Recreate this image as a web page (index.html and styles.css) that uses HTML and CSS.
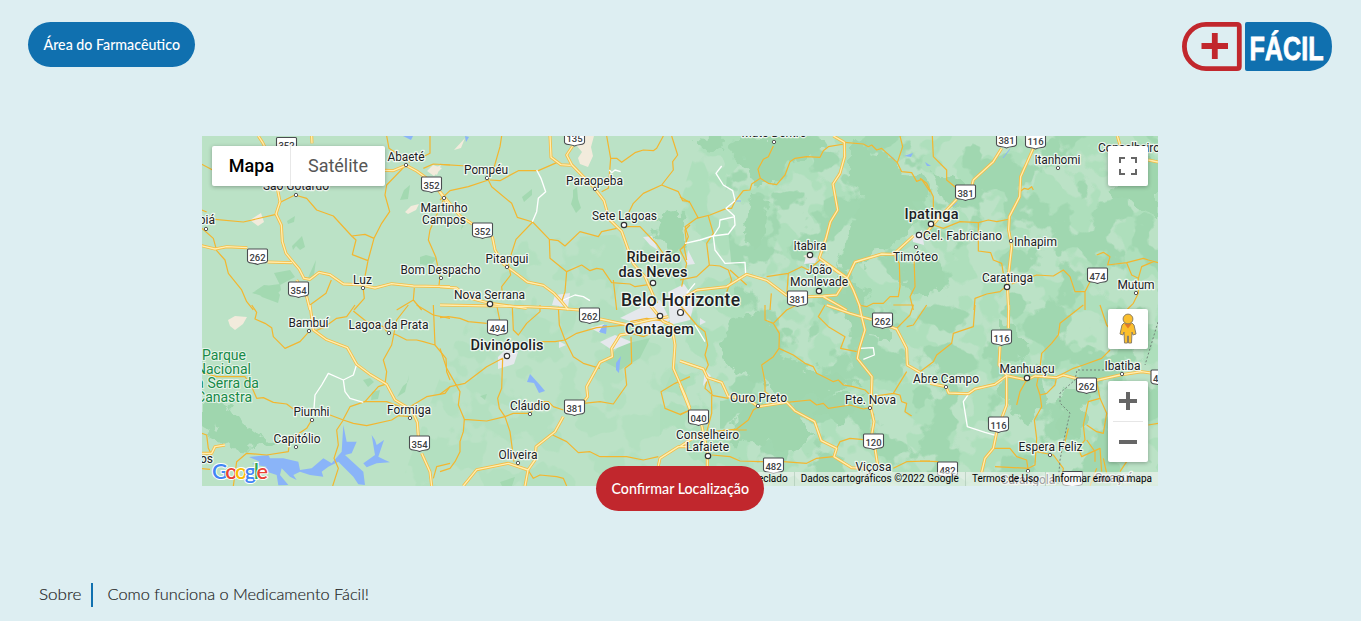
FILE: index.html
```html
<!DOCTYPE html>
<html lang="pt-BR">
<head>
<meta charset="utf-8">
<title>Medicamento Fácil</title>
<link rel="stylesheet" href="styles.css">
</head>
<body>
<header class="header">
  <a class="btn btn-blue"><svg class="label" width="137" height="20"><text x="0.500" y="14.500" textLength="136.500" lengthAdjust="spacingAndGlyphs">Área do Farmacêutico</text></svg></a>
  <svg class="logo" viewBox="0 0 150 49" width="150" height="49">
    <path d="M24 2.4H55Q57.3 2.4 57.3 4.5V44.5Q57.3 46.6 55 46.6H24A21.5 22 0 0 1 24 2.4Z" fill="none" stroke="#c1272d" stroke-width="4.800"/>
    <path d="M32.800 11V37M19.500 24H46" stroke="#c1272d" stroke-width="5.800"/>
    <path d="M65 0H128Q150 3 150 24.500Q150 46 128 49H65Q63 49 63 47V2Q63 0 65 0Z" fill="#1070af"/>
    <text class="logo-text" x="67.500" y="37.500" textLength="74" lengthAdjust="spacingAndGlyphs">FÁCIL</text>
  </svg>
</header>
<main class="main">
  <section class="map">
    <svg class="canvas" viewBox="202 136 956 350" width="956" height="350">
      <defs>
        <filter id="rough" x="-5%" y="-5%" width="110%" height="110%" color-interpolation-filters="sRGB"><feTurbulence type="fractalNoise" baseFrequency=".06" numOctaves="3" seed="4"/><feDisplacementMap in="SourceGraphic" scale="26" xChannelSelector="R" yChannelSelector="G"/></filter>
        <filter id="patch" x="0" y="0" width="100%" height="100%" color-interpolation-filters="sRGB"><feTurbulence type="fractalNoise" baseFrequency=".026" numOctaves="4" seed="11"/><feColorMatrix values="0 0 0 0 .627  0 0 0 0 .843  0 0 0 0 .69  22 0 0 0 -11.800"/><feComposite in2="SourceGraphic" operator="in"/></filter>
        <filter id="patch2" x="0" y="0" width="100%" height="100%" color-interpolation-filters="sRGB"><feTurbulence type="fractalNoise" baseFrequency=".032" numOctaves="3" seed="27"/><feColorMatrix values="0 0 0 0 .682  0 0 0 0 .875  0 0 0 0 .737  0 22 0 0 -10.800"/><feComposite in2="SourceGraphic" operator="in"/></filter>
        <g id="shield"><path d="M-9-7.500H9Q10-7.500 10-6.500V4Q10 6 6 6.500Q2 7 0 8Q-2 7-6 6.500Q-10 6-10 4V-6.500Q-10-7.500-9-7.500Z" fill="#fff" stroke="#4a4d50" stroke-width="1.100"/></g>
        <g id="hw">
          <g transform="translate(200 130) scale(.33333)">
            <path d="M175 18L188 38 198 58 230 165 240 215 228 252 244 285 247 335 258 370 276 392 298 418 312 445 330 448 357 427 390 434 430 462 480 464 525 474 575 461 640 468 750 470M0 346L45 357 80 350 142 353M203 396L276 398M290 450L320 500 330 540M555 121L580 122 618 106 650 123 680 145M715 180L750 232M335 18L336 40"/>
          </g>
          <g transform="translate(440 130) scale(.33333)">
            <path d="M0 185L60 258 97 282M157 320L165 360 190 402 232 433 262 456 310 466 342 490 365 515M0 470L50 474 80 502 150 520 260 535M330 18L333 82 363 104 392 106M398 48L380 75 395 104 464 175 492 212 508 268 545 304 580 402 615 440 650 520M365 515L385 540"/>
          </g>
          <g transform="translate(680 130) scale(.33333)">
            <path d="M460 18L493 37 494 80 480 130 459 162 473 240 451 276 438 325 418 384 470 424 502 444 520 480 540 530M418 384L502 444 525 396 565 384 605 372 640 373 700 318M50 480L140 470 200 433 260 451 322 498M384 500L430 498 470 495 502 444M0 510L50 480M430 500L500 540"/>
          </g>
          <g transform="translate(920 130) scale(.33333)">
            <path d="M245 55L220 95 160 150 155 170M110 208L60 260 10 318M340 55L302 140 299 200 268 260 266 300 275 350 262 465 266 540M592 18L600 45M685 90L714 96"/>
          </g>
          <g transform="translate(200 305) scale(.33333)">
            <path d="M330 0L340 75 380 104 442 128 470 178 510 208 560 238 585 285 635 315 652 352 655 395M665 445L690 500 695 543M0 445L35 445 45 425 75 420"/>
          </g>
          <g transform="translate(440 305) scale(.33333)">
            <path d="M260 5L330 8 420 15M480 42L565 60 630 45 685 35M570 85L540 90 515 130 517 155 480 172 440 245 443 275 430 292M370 335L345 380 288 425 285 465 264 495 255 543M264 495L205 475 110 494 70 543M630 0L670 50 695 60 705 120 700 190 735 270 750 310M0 0L260 5M750 425L715 425 660 460 655 483"/>
          </g>
          <g transform="translate(680 305) scale(.33333)">
            <path d="M0 168L70 192 82 218 125 232 145 275 200 280 235 305 320 292 345 318 404 350 424 407 470 430 462 455 515 488 560 490M538 0L545 35 555 75 538 130 532 160 576 215 573 310 582 350 575 390M585 430L593 480M440 0L510 25 575 44M630 65L650 72 680 130 682 180 720 202M0 240L30 315M65 360L82 440 82 490M0 425L60 385 70 410"/>
          </g>
          <g transform="translate(920 305) scale(.33333)">
            <path d="M266 0L265 70M240 125L237 180 260 212 320 225 345 213 410 218 430 210 475 222M30 235L78 245 86 264 145 266 165 252 225 238 260 212 260 300 245 340M230 382L220 430 195 460 185 502M530 226L600 210 665 200 700 205 714 210"/>
          </g>
        </g>
      </defs>
      <rect class="ground" x="202" y="136" width="956" height="350"/>
      <path d="M700 136H1158V486H660V400L690 330 665 250Z" filter="url(#patch2)"/>
      <path d="M730 136H1158V486H720V370L735 300 725 200Z" filter="url(#patch)"/>
      <path d="M450 350L520 240 700 230V486H400Z" filter="url(#patch2)" opacity=".55"/>
      <g class="forest" filter="url(#rough)">
        <path d="M740 136L830 136 825 150 790 160 774 184 755 180 730 150ZM752 187L768 205 765 240 758 252 742 230ZM690 136L730 138 720 150 698 145ZM850 145L880 150 895 170 925 175 930 190 915 205 918 220 900 245 880 250 870 265 835 270 850 225 865 205 850 185ZM835 263L860 285 870 315 895 325 885 340 850 335 840 305ZM660 213L685 214 682 250 650 238ZM650 218L682 210 680 235 690 245 670 250ZM730 320L765 310 780 350 765 385 735 375 720 340ZM765 355L810 365 850 380 860 385 800 400 770 395ZM745 402L790 402 815 435 790 455 750 440 735 450 730 420ZM900 260L935 255 945 285 925 300 900 290ZM1110 190L1145 210 1158 215V160L1148 155 1145 180 1120 182ZM1062 390L1085 385 1088 420 1072 440 1058 425ZM1000 385L1040 365 1045 400 1030 425 1010 410ZM202 401L230 405 240 420 268 440 255 450 232 448 202 425ZM935 170L970 190 945 205ZM1000 320L1030 340 1020 360 1000 350ZM820 395L860 395 840 425 815 415Z"/>
      </g>
      <path class="soft" d="M265 286L280 284 281 290 272 299 252 293ZM255 291L264 285 274 286 280 295 278 303 262 297ZM274 273L290 270 295 277 280 285ZM287 221L295 216 294 222 288 224ZM292 246L302 236 305 247 300 250 296 246 293 250ZM307 280L316 260 314 275 308 281ZM420 257L426 255 437 258 430 266 420 264ZM410 185L408 199 400 200 404 190ZM522 197L532 189 532 195 524 202ZM573 190L577 187 578 199 581 208 576 213 571 204 573 197ZM363 380L370 378 374 382 368 387ZM372 392L380 390 378 399 371 400ZM408 382L409 375 405 392 397 397 403 386ZM480 396L487 394 485 400ZM620 345L650 338 640 358 620 370 605 362ZM500 482L515 477 512 486H502ZM462 215L466 222 461 230 464 216Z"/>
      <g class="urban"><path d="M688 250L695 264 686 265ZM668 292L684 284 695 300 690 320 670 325ZM600 342L615 335 632 342 612 350ZM498 357L505 350 518 352 514 364 498 369ZM555 295L570 293 568 307 552 305ZM806 256L817 258 815 263 804 264ZM640 304L660 300 670 320 650 334 640 325ZM912 236L922 230 924 245 913 242ZM643 237L652 236 658 250 650 245ZM700 318L706 322 700 325ZM559 341L566 345 559 348ZM590 328L604 324 600 333ZM620 318L640 308 650 312 636 323ZM705 370L711 376 703 386Z"/>
      <path class="sand" d="M228 320L235 316 247 317 243 324 235 330 230 326ZM430 170L441 165 437 175ZM250 220L261 213 264 222 258 226ZM405 212L411 206 419 204 416 210 408 214ZM579 136L594 136 591 147 593 156 588 167 580 164 578 158 582 152 577 146ZM454 150L465 138 461 148ZM803 256L811 253 810 260ZM427 171L433 165 442 168 434 176Z"/></g>
      <g class="water">
        <path d="M403 136L413 136 411 140ZM465 136L469 137 466 142ZM527 382L530 374 540 385 545 391 539 393 534 383ZM599 332L603 325 607 325 606 334ZM616 363L621 356 620 362 619 373 616 370ZM904 156L913 153 911 157ZM925 162L931 166 927 166Z"/>
        <g transform="translate(200 305) scale(.33333)"><path d="M147 456L205 450 210 460 250 460 295 470 300 495 335 490 370 460 395 475 425 440 430 360 440 410 470 410 455 445 435 450 490 500 495 540 475 538 460 515 415 470 385 485 365 500 370 515 330 510 300 500 280 510 290 525 270 515 245 490 240 510 265 540 235 541 230 510 185 495 200 485 155 477 180 470ZM490 475L525 450 515 390 525 405 530 420 552 405 535 455 555 465 570 472 530 475 500 487Z"/></g>
        <path class="stream" d="M735 201H741M887 153L895 160M1003 158L1010 149M953 206L957 203"/>
      </g>
      <g class="minor">
        <g transform="translate(200 130) scale(.33333)"><path d="M0 100L38 120M235 220L285 195 320 205 350 240 400 258 455 318 495 313 522 325 545 280 569 245 555 195 560 165 617 106M455 318L468 330 457 374 504 392 522 325M504 392L489 470 493 505 462 540M0 238L20 246M45 268L130 276 228 253M0 290L40 325 50 362 75 390 85 430 125 480 140 515 160 540M330 525L378 490 394 450M560 18L567 55 630 97M650 90L690 70 690 18M670 115L700 102 750 105M732 205L690 300 685 330 707 380 720 440 717 466M643 474L640 510 590 540M665 540L640 510"/></g>
        <g transform="translate(440 130) scale(.33333)"><path d="M185 18L180 50 160 120 145 150M0 103L80 108M150 150L180 152 235 122 295 122 350 98M0 210L30 182 85 170 145 150 155 170 215 220 232 262 278 276 228 328 205 400 212 435 185 470 188 502M278 276L328 328 355 332 375 348 420 305 475 320 485 305 530 295M545 290L600 290 650 342 690 400M328 328L330 385 380 425 375 485 365 515M380 425L425 405 450 422 470 415 488 418 515 458 570 462 585 470 630 463M485 185L505 175 512 85 500 18M512 85L530 85 545 97 585 68 610 60 640 62 650 55 670 18M560 260L580 220 610 190 665 165 700 120 698 95 713 75 695 18M665 165L715 185 728 212 750 215M520 450L530 540M750 285L735 300 740 340 720 360 740 400 725 470"/></g>
        <g transform="translate(680 130) scale(.33333)"><path d="M280 48L265 80 250 88 234 118 241 145 215 162 210 180 190 182 165 214 155 235 140 235 90 255 50 265 15 290 25 320 12 350 20 390M241 145L265 160 290 164 315 135 330 95 345 85 380 80 420 82 430 62 445 50 493 42M493 37L550 42 565 50 575 45 590 60 605 55 652 98 668 50 660 18M652 98L665 125 695 128 710 154 725 148 750 185M0 200L30 218 55 265M85 258L100 310 80 340 88 405 120 408 145 420 155 450 140 485M320 500L325 430 365 410 385 420 420 390M325 430L260 440M150 420L200 465M274 490L270 540M640 373L658 400 660 470 655 500 630 500 610 520 580 520 560 530 535 525M702 380L705 470 690 500 700 540M88 405L50 440 0 450"/></g>
        <g transform="translate(920 130) scale(.33333)"><path d="M37 18L40 80 80 120 80 150 110 175M0 145L20 160 40 200V240M40 285L70 295 120 275 175 278 205 270 230 275 270 267M175 278L175 363 212 368 220 390 245 400 250 430M300 185L313 175 325 178 335 170 340 180M266 462L240 485 200 492 165 505 162 540M275 462L350 435 400 438 430 420 450 440 465 485 495 485 495 540M510 455L495 485M530 375L550 367 570 380 563 405 620 398 635 435 655 445 655 490 640 520 620 540M620 398L670 385 685 390 714 398M655 445L665 410 700 395"/></g>
        <g transform="translate(200 305) scale(.33333)"><path d="M155 0L170 22 165 42 195 55 215 68 220 95 255 130 300 110 325 82M345 78L370 68 410 40 440 35 465 0M460 18L500 50 550 65 560 80M580 85L620 105 650 105 670 110 705 120 700 0M705 120L738 160 740 200 750 225M625 0L590 45 575 120 550 165 560 200 555 238 535 245 495 290 450 305 430 343M650 0L700 30 750 40M0 200L50 215 135 215 155 245 170 280 190 278 220 292 260 297 280 312M335 345L320 370 290 390 270 400 265 440 200 450 140 445 110 470 100 543M390 330L430 345 410 375 415 420 402 460 415 490 398 543M430 345L460 355 500 362 575 345 595 332 630 335M490 290L560 290 600 305M630 305L680 275 735 265 750 245M0 383L20 390 25 430 35 450M0 490L30 493M750 475L710 485 700 520"/></g>
        <g transform="translate(440 305) scale(.33333)"><path d="M0 38L25 35 60 40 85 50 140 55M170 0L180 50M217 5L220 75 235 90 260 55 300 20 300 0M300 110L345 110 375 105 410 85 470 68 560 60M355 5L358 60 375 105 400 155 430 175 480 190M0 130L20 190 60 260 55 300 73 343 70 380 60 410 60 440 45 470 30 490 0 500M0 268L30 245 75 235 140 185 188 160 185 250 173 280 178 310 195 335 210 380 222 470M73 343L140 348 195 335 220 325 270 325 300 290 325 290 340 305 370 315M338 390L380 410 415 443 450 440 480 455 560 455 610 465 655 455M430 295L480 290 520 297 560 240 555 190 575 175 573 95M750 215L705 235 663 260 675 310 720 328 750 315M264 495L280 520 300 510 350 515 370 520 380 543M570 50L620 40 680 50M575 85L610 95 665 70"/></g>
        <g transform="translate(680 305) scale(.33333)"><path d="M255 0L255 45 280 55 320 15 350 0M280 55L298 85 297 130 280 155 245 180 255 230 255 260 290 285M297 130L340 150 375 175 400 185 410 205 440 220 460 230 475 225 490 240 520 245 555 255 575 275 640 265 680 200M435 0L415 35 445 65 495 95 482 130 530 140M0 0L50 60 75 80 83 120 75 150 85 180 75 200 95 260 95 325 75 400M80 230L75 250 100 272 145 280M0 330L30 315M200 375L130 375M235 305L220 315 205 345 170 372 100 380M320 292L390 285 410 300 430 295 445 310 510 300 550 312 570 308M95 450L150 455 180 468 240 470 310 470 380 475 410 460 460 455M470 430L480 410 510 400 550 404M640 265L660 270 665 290 680 295 675 320 695 333M640 0L700 0 690 30 650 70M740 0L700 60 680 65M640 490L680 470 750 468"/></g>
        <g transform="translate(920 305) scale(.33333)"><path d="M165 0L160 65 100 85 95 115 50 150 40 170 0 200M490 0L420 55 415 90 395 115 365 145 358 205M540 0L560 60 620 130M410 215L440 200 460 190 490 180 545 160 570 135M355 215L350 240 360 270 380 265 405 240 410 215M360 270L365 305 343 345 350 400 345 480 325 490 225 485M320 225L300 260 290 300M220 430L270 430 290 455 320 465 325 500M0 468L55 470M350 440L400 450 430 490 425 525M530 230L540 280 505 290 490 360 495 405 475 430 485 455 540 430 545 500M500 360L530 380 550 385 560 325 540 280M500 405L525 440 525 470M445 370L430 430M714 355L685 360M600 500L620 470M560 505L550 460M530 490L510 543"/></g>
      </g>
      <g class="white-road" transform="translate(440 130) scale(.33333)"><path d="M290 120L303 145 317 185 295 205 290 245 277 275M508 120L515 128 525 120 542 125M370 510L405 495 430 500 450 512"/></g>
      <g class="white-road" transform="translate(680 130) scale(.33333)"><path d="M125 108L108 130 130 165 158 182 165 212M165 212L138 235 163 258 165 285 145 312 98 318 60 330 15 340M165 260L120 270 118 290 100 318 105 360 135 400 195 397 197 432M45 460L20 490"/></g>
      <g class="white-road" transform="translate(200 305) scale(.33333)"><path d="M470 178L460 210 430 225 385 205 365 240 345 270 342 310M430 225L435 260 450 280 490 292"/></g>
      <g class="white-road" transform="translate(680 305) scale(.33333)"><path d="M538 130L580 128 583 150 550 163M45 60L75 110"/></g>
      <g class="white-road" transform="translate(920 305) scale(.33333)"><path d="M145 268L130 290 142 365 195 382 230 392"/></g>
      <use href="#hw" class="hw-edge"/><use href="#hw" class="hw-core"/>
      <path class="border-line" d="M1158 322L1145 365M1120 370H1077L1075 380 1060 393 1060 403 1070 413 1066 430 1060 460 1058 484"/>
      <g class="shields">
        <use href="#shield" x="286.500" y="145"/><text x="286.500" y="149">352</text>
        <use href="#shield" x="431.500" y="184.500"/><text x="431.500" y="188.500">352</text>
        <use href="#shield" x="482.500" y="230.500"/><text x="482.500" y="234.500">352</text>
        <use href="#shield" x="574.500" y="138"/><text x="574.500" y="142">135</text>
        <use href="#shield" x="257.500" y="256.500"/><text x="257.500" y="260.500">262</text>
        <use href="#shield" x="298.500" y="289.500"/><text x="298.500" y="293.500">354</text>
        <use href="#shield" x="589.500" y="315.500"/><text x="589.500" y="319.500">262</text>
        <use href="#shield" x="497.500" y="327.500"/><text x="497.500" y="331.500">494</text>
        <use href="#shield" x="574.500" y="407.500"/><text x="574.500" y="411.500">381</text>
        <use href="#shield" x="419.500" y="443.500"/><text x="419.500" y="447.500">354</text>
        <use href="#shield" x="698.500" y="417.500"/><text x="698.500" y="421.500">040</text>
        <use href="#shield" x="773.500" y="465.500"/><text x="773.500" y="469.500">482</text>
        <use href="#shield" x="797.500" y="298.500"/><text x="797.500" y="302.500">381</text>
        <use href="#shield" x="882.500" y="320.500"/><text x="882.500" y="324.500">262</text>
        <use href="#shield" x="873.500" y="441.500"/><text x="873.500" y="445.500">120</text>
        <use href="#shield" x="965.500" y="192.500"/><text x="965.500" y="196.500">381</text>
        <use href="#shield" x="1006.500" y="140"/><text x="1006.500" y="144">381</text>
        <use href="#shield" x="1035.500" y="141"/><text x="1035.500" y="145">116</text>
        <use href="#shield" x="1097.500" y="275.500"/><text x="1097.500" y="279.500">474</text>
        <use href="#shield" x="1001.500" y="337.500"/><text x="1001.500" y="341.500">116</text>
        <use href="#shield" x="998.500" y="424.500"/><text x="998.500" y="428.500">116</text>
        <use href="#shield" x="1086.500" y="385.500"/><text x="1086.500" y="389.500">262</text>
        <use href="#shield" x="947.500" y="469.500"/><text x="947.500" y="473.500">482</text>
        <use href="#shield" x="1161" y="377.500"/><text x="1161" y="381.500">482</text>
        <use href="#shield" x="1072.500" y="479"/>
      </g>
      <g class="dots">
        <circle cx="296" cy="195" r="1.700"/><circle cx="206" cy="229" r="1.700"/><circle cx="406" cy="165" r="1.700"/><circle cx="444" cy="198" r="1.700"/><circle cx="487" cy="178" r="1.700"/><circle cx="595" cy="189" r="1.700"/><circle cx="363" cy="288" r="1.700"/><circle cx="441" cy="278" r="1.700"/><circle cx="507" cy="267" r="1.700"/><circle cx="309" cy="331" r="1.700"/><circle cx="389" cy="333" r="1.700"/><circle cx="312" cy="420" r="1.700"/><circle cx="296" cy="447" r="1.700"/><circle cx="410" cy="418" r="1.700"/><circle cx="530" cy="414" r="1.700"/><circle cx="518" cy="463" r="1.700"/><circle cx="774" cy="142" r="1.700"/><circle cx="916" cy="247" r="1.700"/><circle cx="1011" cy="241" r="1.700"/><circle cx="1058" cy="168" r="1.700"/><circle cx="1136" cy="293" r="1.700"/><circle cx="758" cy="406" r="1.700"/><circle cx="870" cy="408" r="1.700"/><circle cx="946" cy="387" r="1.700"/><circle cx="1122" cy="374" r="1.700"/><circle cx="1050" cy="455" r="1.700"/><circle cx="1028" cy="471" r="1.700"/>
        <g class="city"><circle cx="624" cy="225" r="2.700"/><circle cx="653" cy="283" r="2.700"/><circle cx="490" cy="304" r="2.700"/><circle cx="507" cy="356" r="2.700"/><circle cx="660" cy="316" r="2.700"/><circle cx="680.500" cy="312.500" r="3"/><circle cx="810" cy="255" r="2.700"/><circle cx="819" cy="291" r="2.700"/><circle cx="931" cy="224" r="2.700"/><circle cx="919" cy="235" r="2.700"/><circle cx="1007" cy="287" r="2.700"/><circle cx="1027" cy="378" r="2.700"/><circle cx="708" cy="456" r="2.700"/></g>
      </g>
      <g class="places">
        <text x="296" y="190" textLength="66">São Gotardo</text><text class="end" x="215" y="224">Ibiá</text><text x="406" y="160.500" textLength="37">Abaeté</text><text x="486" y="173.500" textLength="44">Pompéu</text><text x="594.500" y="184.500" textLength="57">Paraopeba</text><text x="624.500" y="219.500" textLength="65">Sete Lagoas</text><text x="444" y="211.500" textLength="47">Martinho</text><text x="444" y="223.500" textLength="44">Campos</text><text x="507" y="262.500" textLength="43">Pitangui</text><text x="440.500" y="273.500" textLength="80">Bom Despacho</text><text x="489.500" y="298.500" textLength="71">Nova Serrana</text><text x="362.500" y="283.500">Luz</text><text x="308.500" y="326.500" textLength="40">Bambuí</text><text x="388.500" y="328.500" textLength="80">Lagoa da Prata</text><text x="530" y="409.500" textLength="40">Cláudio</text><text x="518" y="458.500" textLength="39">Oliveira</text><text x="409" y="413.500" textLength="44">Formiga</text><text x="311.500" y="415.500" textLength="36">Piumhi</text><text x="297" y="442.500" textLength="47">Capitólio</text><text class="end" x="213" y="462.500">Passos</text>
        <text x="774" y="137" textLength="65">Mato Dentro</text><text x="810" y="249.500" textLength="33">Itabira</text><text x="819" y="273.500" textLength="26">João</text><text x="819" y="285.500" textLength="58">Monlevade</text><text x="962.500" y="239.500" textLength="79">Cel. Fabriciano</text><text x="915.500" y="260.500" textLength="45">Timóteo</text><text x="1035.500" y="245.500" textLength="43">Inhapim</text><text x="1057.500" y="163.500" textLength="46">Itanhomi</text><text x="1129" y="151.500" textLength="62">Conselheiro</text><text x="1007.500" y="281.500" textLength="51">Caratinga</text><text x="1136" y="288.500" textLength="37">Mutum</text><text x="758.500" y="401.500" textLength="57">Ouro Preto</text><text x="870.500" y="403.500" textLength="51">Pte. Nova</text><text x="707.500" y="438.500" textLength="63">Conselheiro</text><text x="707.500" y="450.500" textLength="43">Lafaiete</text><text x="873.500" y="470.500" textLength="36">Viçosa</text><text x="946" y="382.500" textLength="66">Abre Campo</text><text x="1027" y="372.500" textLength="55">Manhuaçu</text><text x="1122.500" y="369.500" textLength="36">Ibatiba</text><text x="1050.500" y="450.500" textLength="64">Espera Feliz</text><text x="1028" y="484">Carangola</text><text x="1113" y="482">Guaçuí</text>
        <g class="mid"><text x="653.500" y="261.500" textLength="54">Ribeirão</text><text x="653" y="276.500" textLength="69">das Neves</text><text x="507" y="349.500" textLength="73">Divinópolis</text><text x="659.500" y="333.500" textLength="69">Contagem</text><text x="931.500" y="218.500" textLength="54">Ipatinga</text></g>
        <text class="big" x="680.500" y="305.500" textLength="119">Belo Horizonte</text>
      </g>
      <g class="park"><text x="246" y="360">Parque</text><text x="251" y="374">Nacional</text><text x="259" y="388">da Serra da</text><text x="252" y="402">Canastra</text></g>
      <text class="google" x="212" y="479" textLength="56"><tspan fill="#4285f4">G</tspan><tspan fill="#ea4335">o</tspan><tspan fill="#fbbc04">o</tspan><tspan fill="#4285f4">g</tspan><tspan fill="#34a853">l</tspan><tspan fill="#ea4335">e</tspan></text>
    </svg>
    <div class="types"><span class="type active">Mapa</span><span class="type">Satélite</span></div>
    <div class="control full"><svg width="18" height="18"><path d="M1 6V1H6M12 1H17V6M17 12V17H12M6 17H1V12" fill="none" stroke="#666" stroke-width="2"/></svg></div>
    <div class="control person"><svg width="18" height="32" viewBox="0 0 18 32"><path d="M5 10H13L15 12 17 21 14 22 13 19 12.500 30H9.500V23H8.500V30H5.500L5 19 4 22 1 21 3 12Z" fill="#fbbf2d" stroke="#8c8067"/><path d="M5.500 11H12.500L9 15.500Z" fill="#e57a27"/><circle cx="9" cy="6" r="4.900" fill="#fbbf2d" stroke="#8c8067"/></svg></div>
    <div class="control zoom"><svg width="18" height="18"><path d="M0 9H18M9 0V18" stroke="#666" stroke-width="4"/></svg><i class="split"></i><svg width="18" height="18"><path d="M0 9H18" stroke="#666" stroke-width="4"/></svg></div>
    <div class="credits"><span>Atalhos do teclado</span><span>Dados cartográficos ©2022 Google</span><span>Termos de Uso</span><span>Informar erro no mapa</span></div>
  </section>
  <a class="btn btn-red"><svg class="label" width="138" height="20"><text x="0.500" y="14.500" textLength="137.500" lengthAdjust="spacingAndGlyphs">Confirmar Localização</text></svg></a>
</main>
<footer class="footer">
  <a class="about"><svg class="foot-label" width="43" height="24"><text x="0" y="17" textLength="42.500" lengthAdjust="spacingAndGlyphs">Sobre</text></svg></a>
  <a><svg class="foot-label" width="263" height="24"><text x="0.500" y="17" textLength="261.500" lengthAdjust="spacingAndGlyphs">Como funciona o Medicamento Fácil!</text></svg></a>
</footer>
</body>
</html>
```
FILE: styles.css
```css
* { box-sizing: border-box; }
body { margin: 0; height: 621px; overflow: hidden; background: #ddeef2; font-family: Roboto, sans-serif; display: flex; flex-direction: column; }
.header { display: flex; justify-content: space-between; align-items: flex-start; height: 71px; padding: 22px 29px 0 28px; }
.logo { display: block; }
.logo-text { font: 700 34px "Liberation Sans", sans-serif; fill: #fff; stroke: #fff; stroke-width: .8; }
.btn { display: flex; align-items: center; justify-content: center; height: 45px; border-radius: 23px; color: #fff; }
.btn-blue { width: 167px; background: #1070af; }
.btn-red { width: 168px; margin: -20px 1px 0 0; background: #c1272d; position: relative; z-index: 2; }
.label { font: 500 14.5px Lato, sans-serif; fill: #fff; overflow: visible; }
.main { display: flex; flex-direction: column; align-items: center; margin-top: 65px; padding-right: 1px; }
.map { position: relative; width: 956px; height: 350px; overflow: hidden; }
.canvas { display: block; }
.ground { fill: #bbe2c6; }
.forest { fill: #9fd6ae; }
.soft { fill: #a3d9b1; }
.urban { fill: #e5e8ec; }
.sand { fill: #f2ebdc; }
.water { fill: #8ab4f8; }
.stream { fill: none; stroke: #8ab4f8; stroke-width: 1; }
.minor { fill: none; stroke: #f3b62f; stroke-width: 3.6; stroke-linejoin: round; }
.white-road { fill: none; stroke: #fff; stroke-width: 4; stroke-linejoin: round; }
.hw-edge { fill: none; stroke: #f5bd45; stroke-width: 9; stroke-linejoin: round; }
.hw-core { fill: none; stroke: #ffeeb0; stroke-width: 4; stroke-linejoin: round; }
.border-line { fill: none; stroke: #74857b; stroke-width: 1; stroke-dasharray: 2 2; }
.shields text { font: 500 9.5px Roboto, sans-serif; fill: #3c4043; text-anchor: middle; }
.dots { fill: #fff; stroke: #555; stroke-width: 1; }
.city { stroke: #333; stroke-width: 1.2; }
.places { font-size: 12px; fill: #202124; text-anchor: middle; stroke: rgba(255,255,255,.75); stroke-width: 2.5px; paint-order: stroke; stroke-linejoin: round; }
.places .end, .park { text-anchor: end; }
.mid { font-size: 14.5px; font-weight: 500; }
.big { font-size: 17.5px; font-weight: 500; }
.park { font-size: 14px; fill: #188a48; stroke: rgba(255,255,255,.65); stroke-width: 2px; paint-order: stroke; }
.google { font: 600 21.5px Lato, sans-serif; stroke: #fff; stroke-width: 2px; paint-order: stroke; }
.types { position: absolute; left: 10px; top: 10px; display: flex; width: 173px; height: 40px; background: #fff; border-radius: 2px; box-shadow: 0 1px 4px rgba(0,0,0,.3); font-size: 18px; line-height: 40px; color: #565656; }
.type { flex: 1; text-align: center; }
.active { flex: 0 0 79px; padding-left: 1px; color: #000; font-weight: 500; border-right: 1px solid #e8e8e8; }
.control { position: absolute; right: 10px; width: 40px; height: 40px; background: #fff; border-radius: 2px; box-shadow: 0 1px 4px rgba(0,0,0,.3); display: flex; align-items: center; justify-content: center; }
.full { top: 10px; }
.person { top: 173px; }
.zoom { top: 245px; height: 81px; flex-direction: column; gap: 11px; }
.split { width: 30px; height: 1px; background: #e6e6e6; }
.credits { position: absolute; right: 0; bottom: 0; display: flex; height: 14px; background: rgba(245,245,245,.6); font-size: 10px; line-height: 14px; color: #000; white-space: nowrap; }
.credits span { padding: 0 6px; }
.credits span:nth-child(2) { letter-spacing: .03px; }
.credits span + span { border-left: 1px solid rgba(160,190,170,.5); }
.footer { display: flex; margin-top: 72px; padding-left: 39px; height: 24px; }
.about { width: 54px; border-right: 2px solid #1070af; margin-right: 14px; }
.foot-label { display: block; overflow: visible; font: 300 16.5px Lato, sans-serif; fill: #222; stroke: #222; stroke-width: .15px; }
```
